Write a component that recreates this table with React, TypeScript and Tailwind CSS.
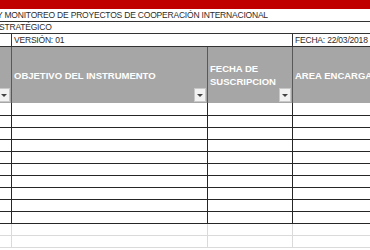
const font = { fontFamily: '"Liberation Sans", Arial, sans-serif' };

function Dropdown({ className = '' }: { className?: string }) {
  return (
    <div
      className={`absolute bottom-[1px] flex h-[14px] w-[12px] items-center justify-center border border-[#c8c8c8] bg-[#f2f2f2] ${className}`}
    >
      <div className="h-0 w-0 border-x-[3px] border-t-[3px] border-x-transparent border-t-[#444]" />
    </div>
  );
}

export default function App() {
  const bodyRows = Array.from({ length: 10 });
  const gridRows = Array.from({ length: 2 });

  return (
    <div className="h-[250px] w-[370px] overflow-hidden bg-white text-[#2b2b2b]" style={font}>
      {/* Barra roja */}
      <div className="h-[9px] bg-[#c00000]" />

      {/* Título */}
      <div className="flex h-[13px] items-center border-b border-[#333] whitespace-nowrap text-[8.5px] leading-none">
        <span className="-ml-[3px] tracking-[-0.2px]">Y MONITOREO DE PROYECTOS DE COOPERACIÓN INTERNACIONAL</span>
      </div>
      <div className="flex h-[12px] items-center border-b border-[#333] whitespace-nowrap text-[8.5px] leading-none">
        <span className="-ml-[1px] tracking-[-0.2px]">STRATÉGICO</span>
      </div>
      <div className="flex h-[13px] border-b border-[#333] whitespace-nowrap text-[8.5px] leading-none">
        <div className="w-[12px] shrink-0 border-r border-[#333]" />
        <div className="flex w-[281px] shrink-0 items-center border-r border-[#333] pl-[2px] tracking-[-0.2px]">VERSIÓN: 01</div>
        <div className="flex flex-1 items-center pl-[2px] tracking-[-0.2px]">FECHA: 22/03/2018</div>
      </div>

      {/* Encabezado de la tabla */}
      <div className="flex h-[56px] bg-[#a6a6a6] text-[9.5px] font-bold leading-[13px] text-white">
        <div className="relative w-[12px] shrink-0 border-r border-[#595959]">
          <Dropdown className="right-[1px]" />
        </div>
        <div className="relative flex w-[196px] shrink-0 items-center border-r border-[#595959] pl-[2px]">
          OBJETIVO DEL INSTRUMENTO
          <Dropdown className="right-[1px]" />
        </div>
        <div className="relative flex w-[85px] shrink-0 items-center border-r border-[#595959] pl-[2px]">
          <span>
            FECHA DE
            <br />
            SUSCRIPCION
          </span>
          <Dropdown className="right-[1px]" />
        </div>
        <div className="flex flex-1 items-center whitespace-nowrap pl-[2px]">AREA ENCARGADA</div>
      </div>

      {/* Filas con bordes */}
      {bodyRows.map((_, i) => (
        <div key={i} className={`flex border-b border-[#262626] ${i === 0 ? 'h-[13px]' : 'h-[12px]'}`}>
          <div className="w-[12px] shrink-0 border-r border-[#262626]" />
          <div className="w-[196px] shrink-0 border-r border-[#262626]" />
          <div className="w-[85px] shrink-0 border-r border-[#262626]" />
          <div className="flex-1" />
        </div>
      ))}

      {/* Cuadrícula vacía */}
      {gridRows.map((_, i) => (
        <div key={i} className="flex h-[12px] border-b border-[#dadada]">
          <div className="w-[12px] shrink-0 border-r border-[#dadada]" />
          <div className="w-[196px] shrink-0 border-r border-[#dadada]" />
          <div className="w-[85px] shrink-0 border-r border-[#dadada]" />
          <div className="flex-1" />
        </div>
      ))}
    </div>
  );
}
